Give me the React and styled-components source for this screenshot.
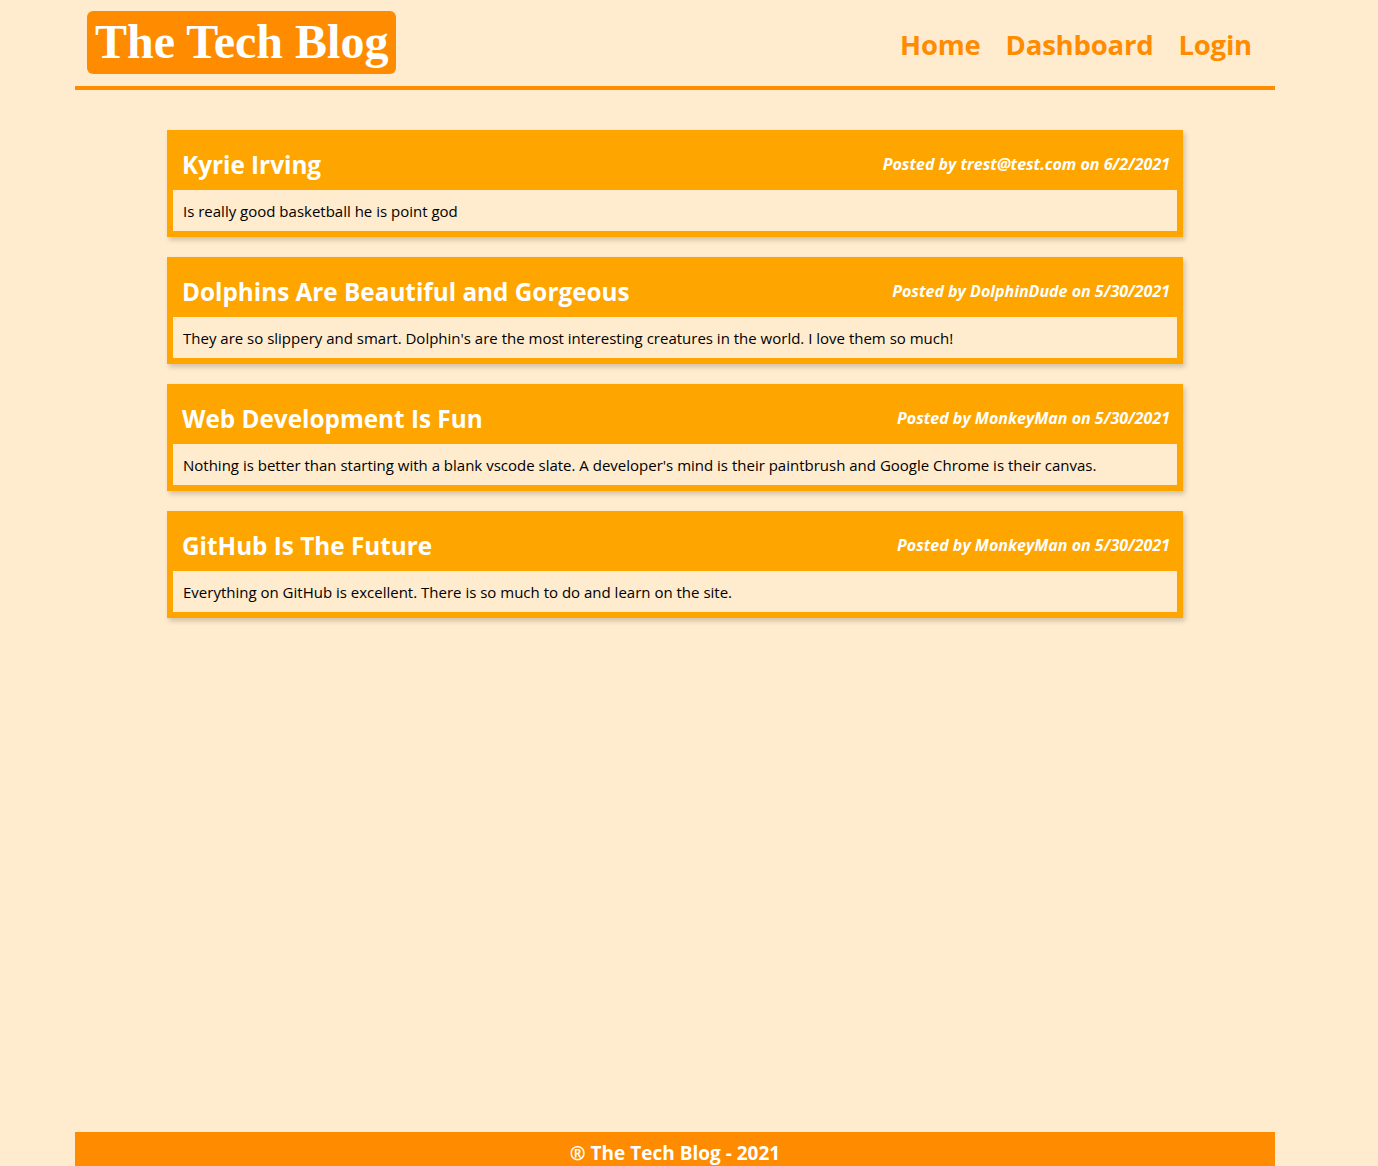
import React from 'react'
import styled, { createGlobalStyle } from 'styled-components'

const posts = [
  {
    title: 'Kyrie Irving',
    author: 'trest@test.com',
    date: '6/2/2021',
    body: 'Is really good basketball he is point god',
  },
  {
    title: 'Dolphins Are Beautiful and Gorgeous',
    author: 'DolphinDude',
    date: '5/30/2021',
    body: "They are so slippery and smart. Dolphin's are the most interesting creatures in the world. I love them so much!",
  },
  {
    title: 'Web Development Is Fun',
    author: 'MonkeyMan',
    date: '5/30/2021',
    body: "Nothing is better than starting with a blank vscode slate. A developer's mind is their paintbrush and Google Chrome is their canvas.",
  },
  {
    title: 'GitHub Is The Future',
    author: 'MonkeyMan',
    date: '5/30/2021',
    body: 'Everything on GitHub is excellent. There is so much to do and learn on the site.',
  },
]

function App() {
  return (
    <>
      <GlobalStyle />
      <Wrapper>
        <Header>
          <Logo>The Tech Blog</Logo>
          <Nav>
            <a>Home</a>
            <a>Dashboard</a>
            <a>Login</a>
          </Nav>
        </Header>

        <Main>
          {posts.map((post) => (
            <Post key={post.title}>
              <PostHead>
                <PostTitle>{post.title}</PostTitle>
                <PostMeta>
                  Posted by {post.author} on {post.date}
                </PostMeta>
              </PostHead>
              <PostBody>{post.body}</PostBody>
            </Post>
          ))}
        </Main>

        <Footer>® The Tech Blog - 2021</Footer>
      </Wrapper>
    </>
  )
}

export default App

const GlobalStyle = createGlobalStyle`
  html, body {
    margin: 0;
    padding: 0;
    background: #ffebcd;
  }
  body {
    font-family: "Open Sans", "Noto Sans", sans-serif;
    color: #000;
  }
`

const Wrapper = styled.div`
  width: 1200px;
  margin: 0 75px;
`

const Header = styled.header`
  display: flex;
  align-items: center;
  justify-content: space-between;
  height: 86px;
  border-bottom: 4px solid #ff8c00;
  padding: 0 23px 0 12px;
  box-sizing: content-box;
`

const Logo = styled.h1`
  margin: 11px 0 12px;
  align-self: flex-start;
  background: #ff8c00;
  color: #fff;
  border-radius: 6px;
  padding: 3px 8px 5px;
  font-family: "Liberation Serif", "Times New Roman", serif;
  font-weight: bold;
  font-size: 48px;
  line-height: 55px;
`

const Nav = styled.nav`
  display: flex;
  gap: 25px;
  padding-top: 3px;
  a {
    color: #ff8c00;
    font-weight: bold;
    font-size: 27.5px;
    letter-spacing: -0.2px;
    cursor: pointer;
  }
`

const Main = styled.main`
  min-height: 1042px;
  box-sizing: border-box;
  padding: 40px 92px;
  display: flex;
  flex-direction: column;
  gap: 20px;
`

const Post = styled.section`
  background: #ffa500;
  padding: 0 6px 6px;
  box-shadow: 2px 3px 5px rgba(0, 0, 0, 0.18);
`

const PostHead = styled.div`
  display: flex;
  align-items: center;
  justify-content: space-between;
  height: 60px;
  padding: 8px 7px 0 9px;
  box-sizing: border-box;
  color: #fff;
`

const PostTitle = styled.h2`
  margin: 0;
  font-size: 24.3px;
  font-weight: bold;
`

const PostMeta = styled.span`
  font-size: 16px;
  font-weight: bold;
  font-style: italic;
`

const PostBody = styled.p`
  margin: 0;
  background: #ffebcd;
  padding: 11px 10px 9px;
  font-size: 15px;
  line-height: 21px;
`

const Footer = styled.footer`
  background: #ff8c00;
  color: #fff;
  text-align: center;
  font-weight: bold;
  font-size: 19px;
  padding: 8px 0 14px;
`
